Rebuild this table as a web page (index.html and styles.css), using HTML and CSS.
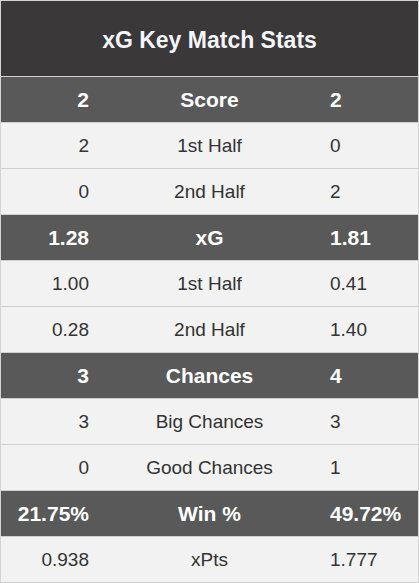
FILE: index.html
```html
<!DOCTYPE html>
<html>
<head>
<meta charset="utf-8">
<link rel="stylesheet" href="styles.css">
</head>
<body>
<div class="card">
  <div class="title">xG Key Match Stats</div>
  <div class="row head"><span class="l">2</span><span class="m">Score</span><span class="r">2</span></div>
  <div class="row"><span class="l">2</span><span class="m">1st Half</span><span class="r">0</span></div>
  <div class="row"><span class="l">0</span><span class="m">2nd Half</span><span class="r">2</span></div>
  <div class="row head"><span class="l">1.28</span><span class="m">xG</span><span class="r">1.81</span></div>
  <div class="row"><span class="l">1.00</span><span class="m">1st Half</span><span class="r">0.41</span></div>
  <div class="row"><span class="l">0.28</span><span class="m">2nd Half</span><span class="r">1.40</span></div>
  <div class="row head"><span class="l">3</span><span class="m">Chances</span><span class="r">4</span></div>
  <div class="row"><span class="l">3</span><span class="m">Big Chances</span><span class="r">3</span></div>
  <div class="row"><span class="l">0</span><span class="m">Good Chances</span><span class="r">1</span></div>
  <div class="row head"><span class="l">21.75%</span><span class="m">Win %</span><span class="r">49.72%</span></div>
  <div class="row"><span class="l">0.938</span><span class="m">xPts</span><span class="r">1.777</span></div>
</div>
</body>
</html>
```
FILE: styles.css
```css
html, body {
  margin: 0;
  padding: 0;
  background: #ffffff;
}
.card {
  width: 419px;
  box-sizing: border-box;
  border: 1px solid #d4d4d4;
  border-bottom: none;
  font-family: "Liberation Sans", Arial, sans-serif;
}
.title {
  height: 76px;
  box-sizing: border-box;
  padding-top: 3px;
  background: #3a3839;
  color: #f4f6fa;
  font-weight: bold;
  font-size: 23px;
  display: flex;
  align-items: center;
  justify-content: center;
  border-bottom: 1px solid #d0d0d0;
}
.row {
  height: 45px;
  display: grid;
  grid-template-columns: 99px 1fr 99px;
  align-items: center;
  background: #f2f2f2;
  color: #333333;
  font-size: 19px;
  border-bottom: 1px solid #d0d0d0;
}
.row.head {
  background: #595959;
  color: #ffffff;
  font-weight: bold;
  font-size: 21px;
}
.l {
  text-align: right;
  padding-right: 11px;
}
.m {
  text-align: center;
}
.r {
  text-align: left;
  padding-left: 11px;
}
```
